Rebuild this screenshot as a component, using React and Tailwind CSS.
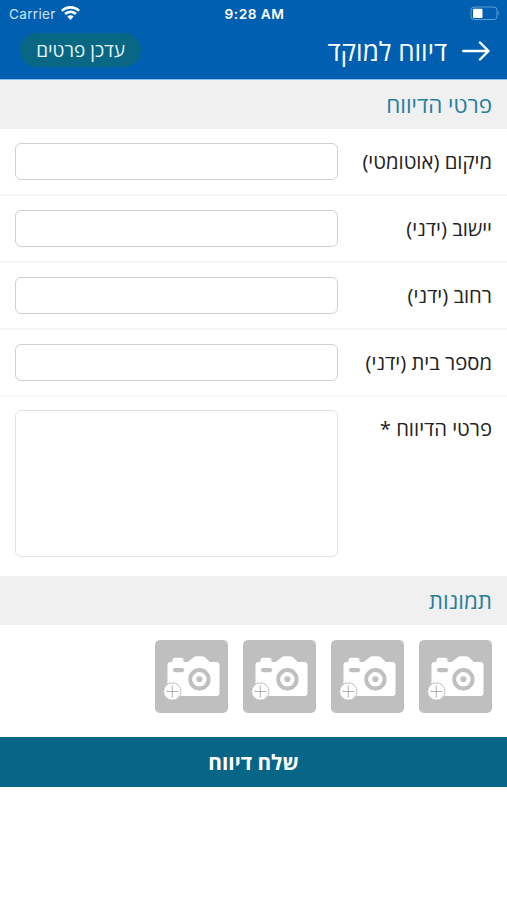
import React, { useState } from "react";

const fields = [
  { name: "location", label: "מיקום (אוטומטי)" },
  { name: "city", label: "יישוב (ידני)" },
  { name: "street", label: "רחוב (ידני)" },
  { name: "house", label: "מספר בית (ידני)" },
];

const StatusBar = () => (
  <div
    dir="ltr"
    className="grid grid-cols-3 items-center h-[27px] pl-[9px] pr-[7px] font-['Inter','Liberation_Sans',sans-serif] text-white"
  >
    <div className="flex items-center gap-[5px] pt-px">
      <span className="text-[13.5px] text-[#cfe4f7] tracking-[0.35px]">Carrier</span>
      <svg viewBox="0 0 18 14" className="w-[19px] h-[15px] -mt-[2px]" fill="white">
        <path d="M9 0C5.500 0 2.400 1.300 0 3.600L1.700 5.300C3.700 3.500 6.200 2.400 9 2.400s5.300 1.100 7.300 2.900L18 3.600C15.600 1.300 12.500 0 9 0z" />
        <path d="M9 4.200c-2.300 0-4.400.9-6 2.300l1.900 1.900C6 7.400 7.400 6.800 9 6.800s3 .6 4.100 1.600L15 6.500C13.400 5.100 11.300 4.200 9 4.200z" />
        <path d="M9 8.700c-1.200 0-2.200.4-3 1.100l3 3.400 3-3.400c-.8-.7-1.800-1.100-3-1.100z" />
      </svg>
    </div>
    <span className="pt-px text-center text-[13.7px] font-semibold tracking-[0.5px]">
      9:28 AM
    </span>
    <svg viewBox="0 0 30 15" className="justify-self-end w-[30px] h-[15px]">
      <rect x="1" y="1" width="26" height="12.500" rx="3" fill="none" stroke="#5f9fd6" />
      <rect x="3" y="2.700" width="9.500" height="9.300" rx="1" fill="white" />
      <path d="M28.300 5c1.300.5 1.300 3.500 0 4z" fill="#5f9fd6" />
    </svg>
  </div>
);

const SectionTitle = ({ children }) => (
  <h2 className="flex items-center h-[49px] pt-px px-[15px] bg-[#f0f0f0] text-[22.4px] text-[#267f9b]">
    {children}
  </h2>
);

const CameraTile = () => (
  <button className="size-[73px]">
    <svg viewBox="0 0 73 73" className="size-full">
      <rect width="73" height="73" rx="5" fill="#bfbfbf" />
      <path
        d="M12.500 25q0-3 3-3h2v-2.300q0-2 2-2h7q2 0 2 2V22h4l6.500-5q1-.7 2.500-.7h5.500q1.500 0 2.500.7l5.500 5h6.500q3 0 3 3v28q0 3-3 3h-46q-3 0-3-3z"
        fill="white"
      />
      <rect x="18" y="28" width="11" height="4.200" rx="2" fill="#bfbfbf" />
      <circle cx="44.400" cy="39.300" r="9.200" fill="none" stroke="#bfbfbf" strokeWidth="4" />
      <circle cx="44.400" cy="39.300" r="3" fill="#bfbfbf" />
      <circle cx="17.300" cy="51.500" r="8.700" fill="white" stroke="#bfbfbf" strokeWidth="1" />
      <path d="M17.300 45.500v12M11.300 51.500h12" stroke="#b0b0b0" strokeWidth="1" />
    </svg>
  </button>
);

const App = () => {
  const [values, setValues] = useState({});

  const handleChange = (event) => {
    const { name, value } = event.target;
    setValues((prev) => ({ ...prev, [name]: value }));
  };

  return (
    <div
      dir="rtl"
      className="min-h-screen bg-white font-['Open_Sans','Noto_Sans',sans-serif] text-[#222]"
    >
      <header className="h-[80px] border-b border-[#8cc0e8] bg-[#005fb0]">
        <StatusBar />
        <div className="flex items-center justify-between h-[46px] pr-[17px] pl-[20px]">
          <div className="flex items-center gap-[15px] text-white">
            <svg
              viewBox="0 0 28 20"
              className="w-[28px] h-[20px] mt-[2px]"
              fill="none"
              stroke="white"
              strokeWidth="2.4"
              strokeLinecap="round"
              strokeLinejoin="round"
            >
              <path d="M1.200 10h25M18 1.500l8.500 8.500-8.500 8.500" />
            </svg>
            <h1 className="pt-[2px] text-[26px] leading-none whitespace-nowrap">דיווח למוקד</h1>
          </div>
          <button className="w-[121px] h-[34px] rounded-full bg-[#076784] text-[19px] text-[#e4f3f7] whitespace-nowrap">
            עדכן פרטים
          </button>
        </div>
      </header>

      <form onSubmit={(event) => event.preventDefault()}>
        <SectionTitle>פרטי הדיווח</SectionTitle>
        <div>
          {fields.map((field) => (
            <label
              key={field.name}
              className="flex items-center justify-between h-[67px] px-[15px] border-b-2 border-[#f6f6f6]"
            >
              <span className="text-[20.3px] whitespace-nowrap">{field.label}</span>
              <input
                type="text"
                name={field.name}
                value={values[field.name] || ""}
                onChange={handleChange}
                className="w-[323px] h-[37px] px-2 border border-[#d0d0d0] rounded-[6px] bg-white"
              />
            </label>
          ))}
        </div>
        <label className="flex items-start justify-between h-[179px] px-[15px] pt-[13px]">
          <span className="mt-[3px] text-[20.3px] whitespace-nowrap">פרטי הדיווח *</span>
          <textarea
            name="details"
            value={values.details || ""}
            onChange={handleChange}
            className="w-[323px] h-[147px] p-2 border border-[#e2e2e2] rounded-[6px] resize-none bg-white"
          />
        </label>

        <SectionTitle>תמונות</SectionTitle>
        <div className="flex gap-[15px] h-[112px] px-[15px] pt-[15px]">
          <CameraTile />
          <CameraTile />
          <CameraTile />
          <CameraTile />
        </div>
        <button
          type="submit"
          className="block w-full h-[50px] pt-px bg-[#076688] text-[20.8px] font-bold text-white"
        >
          שלח דיווח
        </button>
      </form>
    </div>
  );
};

export default App;
